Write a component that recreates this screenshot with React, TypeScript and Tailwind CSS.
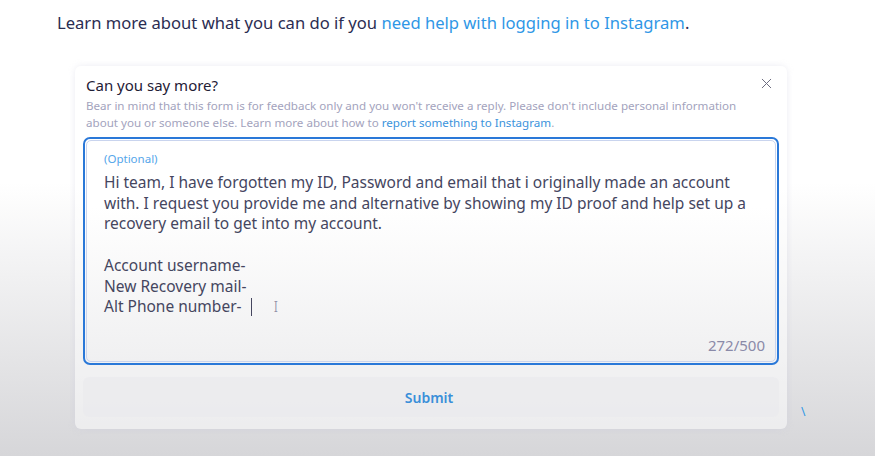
import { X } from "lucide-react";

const lines = [
  "Hi team, I have forgotten my ID, Password and email that i originally made an account",
  "with. I request you provide me and alternative by showing my ID proof and help set up a",
  "recovery email to get into my account.",
  "\u00a0",
  "Account username-",
  "New Recovery mail-",
];

export default function App() {
  return (
    <div
      className="w-[875px] h-[456px] overflow-hidden bg-gradient-to-b from-white from-40% to-[#d6d6d9] text-[#1c1e3f]"
      style={{ fontFamily: '"Noto Sans", "Open Sans", sans-serif' }}
    >
      {/* Intro line */}
      <p className="pl-[57px] pt-[11px] text-[16.6px] leading-6 text-[#2b2d52] whitespace-nowrap">
        Learn more about what you can do if you{" "}
        <span className="text-[#2f97e6]">need help with logging in to Instagram</span>.
      </p>

      {/* Feedback card */}
      <div className="ml-[75px] mt-[31px] w-[712px] rounded-md bg-white/50 shadow-[0_0_6px_rgba(200,200,220,0.35)] px-2 pt-[7px] pb-[12px]">
        <div className="flex items-start justify-between pl-[3px] pr-[4px]">
          <h2 className="text-[15px] leading-6 text-[#1f2036]">Can you say more?</h2>
          <X className="w-[17px] h-[17px] mt-[2px] text-[#6b6b80]" strokeWidth={1.4} />
        </div>
        <p className="pl-[3px] text-[11.6px] leading-[17px] text-[#a3a3bd] whitespace-nowrap">
          Bear in mind that this form is for feedback only and you won't receive a reply. Please don't include personal information
          <br />
          about you or someone else. Learn more about how to{" "}
          <span className="text-[#3b93dc]">report something to Instagram</span>.
        </p>

        {/* Textarea */}
        <div className="mt-[6px] h-[228px] rounded-[7px] border-2 border-[#2a78d8] p-px">
          <div className="relative h-full rounded-[5px] border border-[#c9d4ee] bg-gradient-to-b from-white from-30% to-[#f0f0f1] pl-[17px] pt-[10px]">
            <div className="text-[11.5px] leading-[16px] text-[#55a6ea]">(Optional)</div>
            <div className="mt-[5px] text-[15.5px] leading-[20.7px] text-[#45465f]">
              {lines.map((l, i) => (
                <div key={i} className="whitespace-nowrap">{l}</div>
              ))}
              <div className="flex items-center whitespace-nowrap">
                Alt Phone number-
                <span className="ml-[9px] inline-block w-px h-[18px] bg-[#45465f]" />
                <span className="ml-[22px] text-[15px] text-[#8b8ba3] font-light">I</span>
              </div>
            </div>
            <span className="absolute right-[10px] bottom-[6px] text-[15px] leading-5 text-[#8a8aa8]">272/500</span>
          </div>
        </div>

        {/* Submit */}
        <div className="mt-[12px] h-[40px] rounded-md bg-[#e9eaec]/60 flex items-center justify-center">
          <span className="text-[14px] font-semibold text-[#3a8fd9] ml-[-4px]">Submit</span>
        </div>
      </div>
      <span className="block -mt-[23px] ml-[801px] text-[12px] text-[#2f97e6] leading-none">\</span>
    </div>
  );
}
